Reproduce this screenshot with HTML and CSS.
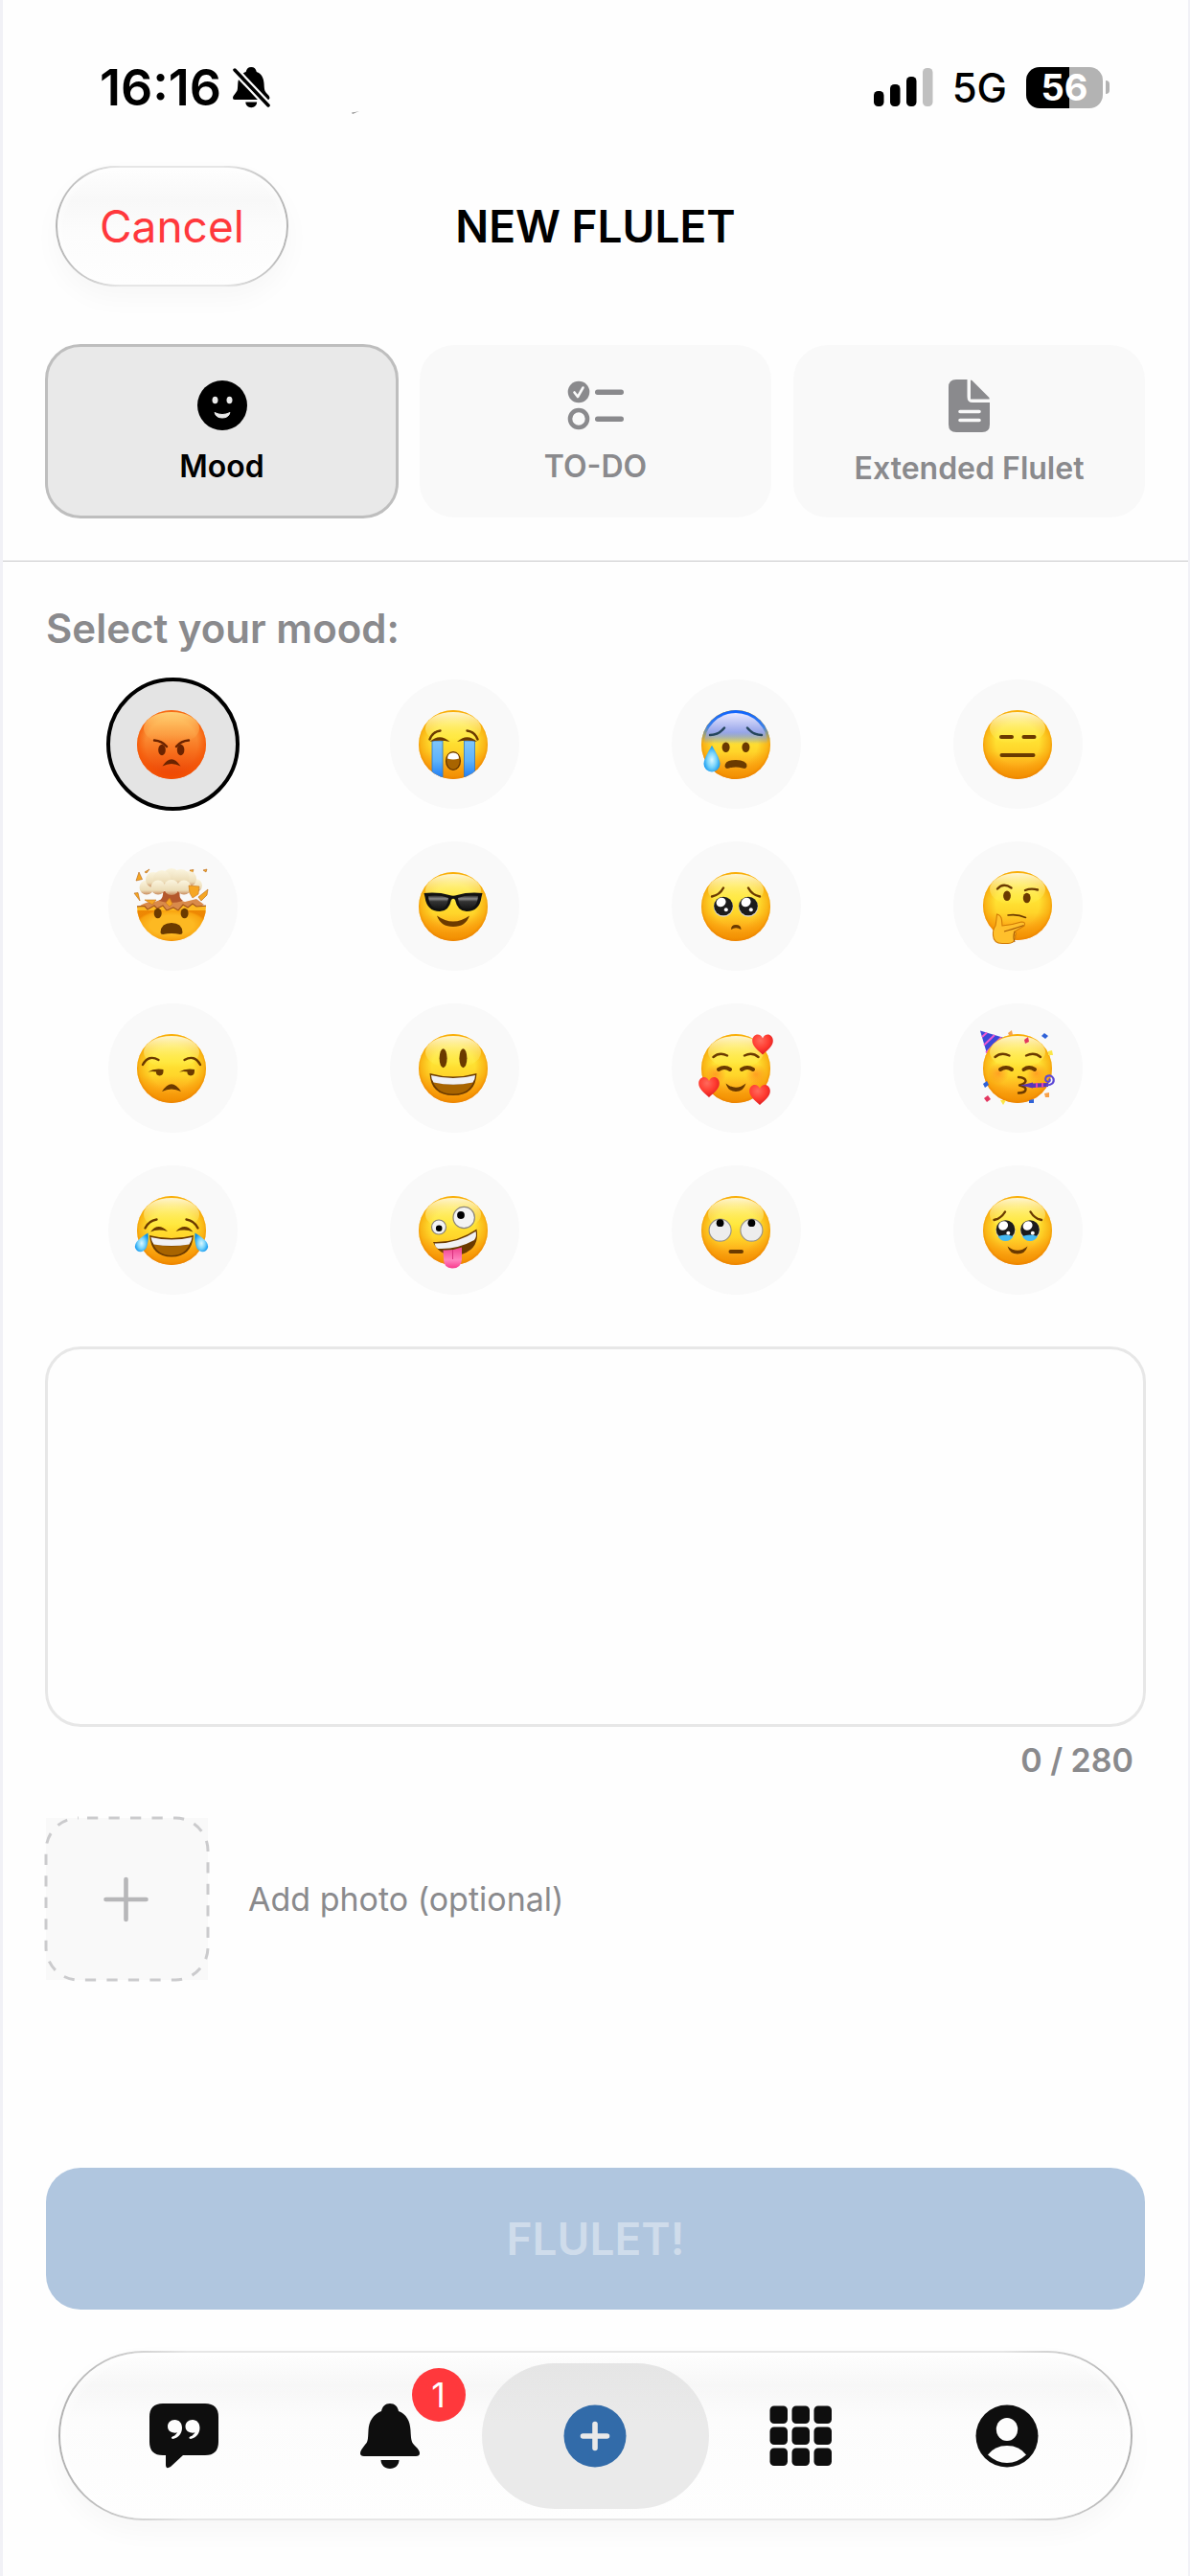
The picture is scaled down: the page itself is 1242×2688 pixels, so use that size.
FILE: index.html
```html
<!DOCTYPE html>
<html lang="en">

<head>
    <meta charset="UTF-8">
    <meta name="viewport" content="width=device-width, initial-scale=1.0">
    <title>New Flulet</title>
    <link rel="stylesheet" href="styles.css">
</head>

<body>
    <!-- Shared gradients and shapes -->
    <svg class="defs" width="0" height="0" aria-hidden="true">
        <defs>
            <linearGradient id="skin" x1="0" y1="0" x2="0" y2="1">
                <stop offset="0" stop-color="#ffce10" />
                <stop offset="0.4" stop-color="#ffe434" />
                <stop offset="0.6" stop-color="#ffd52a" />
                <stop offset="0.8" stop-color="#fdac18" />
                <stop offset="1" stop-color="#ee8a04" />
            </linearGradient>
            <radialGradient id="rim" cx="0.5" cy="0.48" r="0.52">
                <stop offset="0.6" stop-color="#f59300" stop-opacity="0" />
                <stop offset="0.9" stop-color="#f59300" stop-opacity="0.55" />
                <stop offset="1" stop-color="#ec8200" stop-opacity="0.9" />
            </radialGradient>
            <linearGradient id="shine" x1="0" y1="0" x2="0" y2="1">
                <stop offset="0" stop-color="#fffde8" stop-opacity="0.9" />
                <stop offset="1" stop-color="#ffff60" stop-opacity="0" />
            </linearGradient>
            <linearGradient id="angry" x1="0" y1="0" x2="0" y2="1">
                <stop offset="0" stop-color="#fda03c" />
                <stop offset="0.35" stop-color="#fb9238" />
                <stop offset="0.6" stop-color="#f7701d" />
                <stop offset="1" stop-color="#ea3c00" />
            </linearGradient>
            <radialGradient id="angryRim" cx="0.5" cy="0.5" r="0.5">
                <stop offset="0.75" stop-color="#f55505" stop-opacity="0" />
                <stop offset="1" stop-color="#f55505" stop-opacity="0.8" />
            </radialGradient>
            <linearGradient id="angryShine" x1="0" y1="0" x2="0" y2="1">
                <stop offset="0" stop-color="#ffdc80" stop-opacity="0.9" />
                <stop offset="1" stop-color="#ffb050" stop-opacity="0" />
            </linearGradient>
            <linearGradient id="cold" x1="0" y1="0" x2="0" y2="1">
                <stop offset="0" stop-color="#0d62ff" />
                <stop offset="0.25" stop-color="#3f83e6" />
                <stop offset="0.48" stop-color="#6a9aa0" stop-opacity="0" />
            </linearGradient>
            <linearGradient id="coldInner" x1="0" y1="0" x2="0" y2="1">
                <stop offset="0" stop-color="#e9e8ff" />
                <stop offset="0.3" stop-color="#98a6ea" />
                <stop offset="0.5" stop-color="#a3a8b8" stop-opacity="0" />
            </linearGradient>
            <linearGradient id="stream" x1="0" y1="0" x2="0" y2="1">
                <stop offset="0" stop-color="#80c6fa" />
                <stop offset="0.5" stop-color="#5cb2fb" />
                <stop offset="1" stop-color="#1572f0" />
            </linearGradient>
            <radialGradient id="drop" cx="0.5" cy="0.55" r="0.55">
                <stop offset="0" stop-color="#d9f7ff" />
                <stop offset="0.5" stop-color="#79d4fb" />
                <stop offset="1" stop-color="#0a93ee" />
            </radialGradient>
            <linearGradient id="cloud" x1="0" y1="0" x2="0" y2="1">
                <stop offset="0" stop-color="#fbf5df" />
                <stop offset="0.7" stop-color="#ecdcb7" />
                <stop offset="1" stop-color="#c98a5c" />
            </linearGradient>
            <radialGradient id="heartFill" cx="0.4" cy="0.3" r="0.8">
                <stop offset="0" stop-color="#ff6a5c" />
                <stop offset="0.5" stop-color="#ff3b30" />
                <stop offset="1" stop-color="#d4121c" />
            </radialGradient>
            <radialGradient id="blush">
                <stop offset="0" stop-color="#ff7a1a" stop-opacity="0.6" />
                <stop offset="1" stop-color="#ff7a1a" stop-opacity="0" />
            </radialGradient>
            <linearGradient id="lens" x1="0" y1="0" x2="0" y2="1">
                <stop offset="0" stop-color="#222" />
                <stop offset="0.25" stop-color="#8a8a8a" />
                <stop offset="0.45" stop-color="#333" />
                <stop offset="1" stop-color="#161616" />
            </linearGradient>
            <linearGradient id="tongue" x1="0" y1="0" x2="0" y2="1">
                <stop offset="0" stop-color="#f0418f" />
                <stop offset="0.6" stop-color="#ff84bf" />
                <stop offset="1" stop-color="#f8398c" />
            </linearGradient>
            <clipPath id="faceClip">
                <circle cx="40" cy="40" r="36" />
            </clipPath>
            <g id="face">
                <circle cx="40" cy="40" r="36" fill="url(#skin)" />
                <circle cx="40" cy="40" r="36" fill="url(#rim)" />
                <ellipse cx="40" cy="23" rx="29" ry="17" fill="url(#shine)" />
            </g>
            <g id="bigEye">
                <circle cy="1" r="10.2" fill="#d9d4cc" />
                <circle r="9.8" fill="#1c1c1c" />
                <ellipse cx="-2.4" cy="-4" rx="5.2" ry="4.6" fill="#fff" transform="rotate(-35 -2.4 -4)" />
                <circle cx="2.8" cy="3.8" r="2" fill="#fff" />
            </g>
            <path id="heart" d="M0 10.5C-6 5-10.8 1.5-10.8-4C-10.8-8-8-10.5-5.3-10.5C-3-10.5-1-9 0-6.5C1-9 3-10.5 5.3-10.5C8-10.5 10.8-8 10.8-4C10.8 1.5 6 5 0 10.5Z" fill="url(#heartFill)" />
            <path id="tear" d="M0-13.5Q8.5 0 8.5 5.5A8.5 8.5 0 0 1-8.5 5.5Q-8.5 0 0-13.5Z" fill="url(#drop)" />
            <g id="bell">
                <path d="M31 0c5 0 8 3 9 8 8 3 12 10 12.5 20 .5 10 1 12 3.5 15 4 4 6 6 6 9q0 3-4 3H4q-4 0-4-3c0-3 2-5 5-9 3-3 3-5 3.5-15C9 18 14 11 22 8c1-5 4-8 9-8z" />
                <path d="M21.5 59h19c0 5-4 9-9.5 9s-9.500-4-9.500-9z" />
            </g>
            <mask id="slashMask" maskUnits="userSpaceOnUse" x="0" y="0" width="40" height="43">
                <rect width="40" height="43" fill="#fff" />
                <path d="M2 3 37 40" stroke="#000" stroke-width="8" stroke-linecap="round" />
            </mask>
        </defs>
    </svg>

    <div class="screen">
        <div class="status-bar">
            <div class="status-left">
                <span class="clock">16:16</span>
                <svg width="40" height="43" viewBox="0 0 40 43">
                    <g mask="url(#slashMask)">
                        <use href="#bell" transform="scale(0.62)" />
                    </g>
                    <path d="M2 3 37 40" stroke="#000" stroke-width="3.5" stroke-linecap="round" />
                </svg>
                <svg class="glint" width="8" height="3" viewBox="0 0 8 3">
                    <path d="M0 1.500Q3 1 8 0Q4 1.500 1 3Z" fill="#8e8e8e" />
                </svg>
            </div>
            <div class="status-right">
                <svg width="62" height="40" viewBox="0 0 62 40">
                    <rect x="0" y="24" width="10.5" height="16" rx="4.5" />
                    <rect x="17" y="17" width="10.5" height="23" rx="4.5" />
                    <rect x="34" y="9" width="10.5" height="31" rx="4.5" />
                    <rect x="51" y="0" width="10.5" height="40" rx="4.5" fill="#c0c0c0" />
                </svg>
                <span class="network">5G</span>
                <div class="battery"><span class="battery-level">56</span></div>
            </div>
        </div>

        <header class="top-bar">
            <button type="button" class="cancel-button">Cancel</button>
            <h1 class="title">NEW FLULET</h1>
        </header>

        <div class="type-tabs">
            <button type="button" class="type-tab active">
                <svg width="52" height="52" viewBox="0 0 52 52">
                    <circle cx="26" cy="26" r="26" />
                    <ellipse cx="18.5" cy="20.5" rx="3" ry="3.8" fill="#e9e9e9" />
                    <ellipse cx="33.5" cy="20.5" rx="3" ry="3.8" fill="#e9e9e9" />
                    <path d="M18 33.5Q26 37.5 34 33.5Q32.5 39 26 39Q19.5 39 18 33.5Z" fill="#e9e9e9" stroke="#e9e9e9" stroke-linejoin="round" />
                </svg>
                <span>Mood</span>
            </button>
            <button type="button" class="type-tab">
                <svg width="60" height="52" viewBox="0 0 60 52" fill="#8a8a8d">
                    <circle cx="12" cy="12" r="11.3" />
                    <path d="M7.5 12.5 11 17 16.5 7.5" fill="none" stroke="#f9f9f9" stroke-width="2.6" stroke-linecap="round" stroke-linejoin="round" />
                    <circle cx="12" cy="40" r="9" fill="none" stroke="#8a8a8d" stroke-width="4.6" />
                    <rect x="29" y="9.5" width="30" height="5.5" rx="2.7" />
                    <rect x="29" y="37.5" width="30" height="5.5" rx="2.7" />
                </svg>
                <span>TO-DO</span>
            </button>
            <button type="button" class="type-tab">
                <svg width="44" height="55" viewBox="0 0 44 55" fill="#8a8a8d">
                    <path d="M8 0H19.5V18Q19.5 24 25 24H43V47Q43 55 35 55H8Q0 55 0 47V8Q0 0 8 0Z" />
                    <path d="M23 1Q23 0 24.5 1L42 18.5Q43.5 20.5 42 20.5H23Z" />
                    <path d="M12 33.5H32M12 42.5H32" stroke="#f9f9f9" stroke-width="3.6" stroke-linecap="round" />
                </svg>
                <span>Extended Flulet</span>
            </button>
        </div>

        <main class="content">
            <h2 class="section-label" id="moodLabel">Select your mood:</h2>

            <div class="mood-grid" role="radiogroup" aria-labelledby="moodLabel">
                <label class="mood">
                    <input type="radio" name="mood" value="angry" aria-label="Angry" checked>
                    <svg viewBox="1 0 80 80">
                        <circle cx="40" cy="40" r="36" fill="url(#angry)" />
                        <circle cx="40" cy="40" r="36" fill="url(#angryRim)" />
                        <ellipse cx="40" cy="23" rx="29" ry="17" fill="url(#angryShine)" />
                        <g fill="#6b2300">
                            <ellipse cx="30" cy="45.5" rx="3.8" ry="5.7" />
                            <ellipse cx="49.6" cy="45.5" rx="3.8" ry="5.7" />
                            <path d="M30.5 62.5Q40 48 49.5 62.5Q40 57.5 30.5 62.5Z" />
                        </g>
                        <path d="M22 35.5Q30 36 35 42M58 35.5Q50 36 45 42" class="line red" />
                    </svg>
                </label>
                <label class="mood">
                    <input type="radio" name="mood" value="crying" aria-label="Crying">
                    <svg viewBox="1 0 80 80">
                        <use href="#face" />
                        <g clip-path="url(#faceClip)" stroke="#2b79c9" stroke-width="0.8">
                            <rect x="18" y="36" width="11" height="42" fill="url(#stream)" />
                            <rect x="51.5" y="36" width="11" height="42" fill="url(#stream)" />
                        </g>
                        <path d="M15.5 34.5Q18.5 26.5 26.5 25.5M65.5 34.5Q62.5 26.5 54.5 25.5" class="line" />
                        <path d="M15.5 37Q26 27.5 36.5 37Q26 34.5 15.5 37ZM44 37Q54.5 27.5 65 37Q54.5 34.5 44 37Z" class="ink" />
                        <ellipse cx="40" cy="57" rx="7.4" ry="9.4" fill="#a86400" stroke="#6b3a00" stroke-width="1.4" />
                        <path d="M34 54.5Q34 48.5 40 48.5Q46 48.5 46 54.5Q40 56.5 34 54.5Z" fill="#fff" />
                    </svg>
                </label>
                <label class="mood">
                    <input type="radio" name="mood" value="anxious" aria-label="Anxious">
                    <svg viewBox="1 0 80 80">
                        <use href="#face" />
                        <circle cx="40" cy="40" r="36" fill="url(#cold)" />
                        <circle cx="40" cy="40" r="33" fill="url(#coldInner)" />
                        <path d="M13 30Q22 30 28 22.5M67 30Q58 30 52 22.5" class="line blue" />
                        <g class="ink">
                            <ellipse cx="29.6" cy="42.7" rx="4" ry="5.2" />
                            <ellipse cx="50.4" cy="42.7" rx="4" ry="5.2" />
                            <path d="M28.5 62.5Q28.5 56 40 56Q51.5 56 51.5 62.5Q51 66 47 64.5Q40 62.5 33 64.5Q29 66 28.5 62.5Z" />
                        </g>
                        <use href="#tear" x="15" y="54.5" />
                    </svg>
                </label>
                <label class="mood">
                    <input type="radio" name="mood" value="expressionless" aria-label="Expressionless">
                    <svg viewBox="1 0 80 80">
                        <use href="#face" />
                        <path d="M23 32H34M46.5 32H57.5M23.5 51H56.5" class="line thick" />
                    </svg>
                </label>

                <label class="mood">
                    <input type="radio" name="mood" value="mind-blown" aria-label="Mind blown">
                    <svg viewBox="1 0 80 80">
                        <g fill="#f5a623" stroke="#b5661a" stroke-width="0.6">
                            <path d="M3 13 6 4 9.5 11.5ZM12 4 17 1 14 5ZM59 2 63 1.5 61.5 5.5ZM1 26 5 25.5 7 34ZM73 2 77 1 76 4ZM68 30 78 22 77 28 71 34Z" />
                        </g>
                        <path d="M6 40Q14 34 20 36L28 33 36 35 44 32 54 35 66 32 74 38 60 44 20 44Z" fill="#d98a4a" />
                        <path d="M31 24Q32 31 27 34Q40 38 52 34Q47 31 49 24Z" fill="#b4582c" />
                        <g fill="url(#cloud)">
                            <circle cx="14" cy="20" r="7.5" />
                            <circle cx="65" cy="18" r="7" />
                            <circle cx="21" cy="12" r="8" />
                            <circle cx="58" cy="11" r="8" />
                            <circle cx="40" cy="9" r="9" />
                            <circle cx="30" cy="11" r="9" />
                            <circle cx="50" cy="9.5" r="8.5" />
                            <circle cx="26" cy="20" r="7.5" />
                            <circle cx="53" cy="20" r="7.5" />
                            <circle cx="40" cy="20" r="8" />
                        </g>
                        <g clip-path="url(#faceClip)">
                            <path d="M3 40 12 39.5 15 43 22 39 25 42 31 39 35 44 42 41 47 44 52 38 57 41 62 37 66 40 77 39V78H3Z" fill="#fdb922" stroke="#a5571c" stroke-width="1.2" />
                            <path d="M4 44H76V76H4Z" fill="url(#rim)" />
                        </g>
                        <path d="M58 18 69 19 68 27 62 31 59 26ZM12 33 24 33 20 38ZM38 31 41 37 38 40 34 36Z" fill="#f6a623" stroke="#c8741a" stroke-width="0.6" />
                        <g class="ink">
                            <ellipse cx="25.7" cy="47" rx="4" ry="5.2" />
                            <ellipse cx="53.6" cy="47" rx="4" ry="5.2" />
                            <path d="M28.5 67Q29 57 40 57Q51 57 51.5 67Q51.5 69 49 69Q40 67 31 69Q28.5 69 28.5 67Z" />
                        </g>
                    </svg>
                </label>
                <label class="mood">
                    <input type="radio" name="mood" value="cool" aria-label="Cool">
                    <svg viewBox="1 0 80 80">
                        <use href="#face" />
                        <path d="M9.5 26Q24 24.5 36 28Q40 29.5 44 28Q56 24.5 70.5 26L69.5 30Q67.5 45 54 45Q44.5 45 42 33Q40 30.5 38 33Q35.5 45 26 45Q12.5 45 10.5 30Z" fill="#111" />
                        <path d="M14 29Q25 27 35 31Q34 42.5 26 42.5Q15 42.5 14 29ZM66 29Q55 27 45 31Q46 42.5 54 42.5Q65 42.5 66 29Z" fill="url(#lens)" />
                        <path d="M23 49.5Q40 61.5 57 49.5Q53 61 40 61Q27 61 23 49.5Z" class="ink" />
                    </svg>
                </label>
                <label class="mood">
                    <input type="radio" name="mood" value="pleading" aria-label="Pleading">
                    <svg viewBox="1 0 80 80">
                        <use href="#face" />
                        <path d="M15 29.5Q23 28 27 20.5M65 29.5Q57 28 53 20.5" class="line" />
                        <use href="#bigEye" x="27" y="39.5" />
                        <use href="#bigEye" x="53" y="39.5" />
                        <path d="M35 64Q35 59 40 59Q45.5 59 45.5 64Q40 60.5 35 64Z" class="ink" />
                    </svg>
                </label>
                <label class="mood">
                    <input type="radio" name="mood" value="thinking" aria-label="Thinking">
                    <svg viewBox="1 0 80 80">
                        <use href="#face" y="-1" />
                        <path d="M19 21.5Q25 14.5 33.5 20.5M48 23Q54 20.5 61 22.5" class="line" />
                        <path d="M30 49Q40 47.5 48.5 51.5" class="line thin" />
                        <g class="ink">
                            <ellipse cx="29" cy="28.7" rx="3.9" ry="5.2" />
                            <ellipse cx="49.7" cy="31" rx="3.9" ry="5.2" />
                        </g>
                        <path d="M18.5 48Q23 49 23.5 54L24 60Q35 59 44 56Q49 56 47 60L37 66Q39.5 68 37.5 70Q38.5 72.5 37 74Q36 78.5 30 78.5H24Q15 78.5 14.5 70Q14 64 17 60Q18 54 18.5 48Z" fill="#ffc02c" stroke="#d27b06" stroke-width="1.1" />
                        <path d="M26 66Q34 64 46.5 59.5M37 66Q35 72 37 77" fill="none" stroke="#a85c08" stroke-width="1.2" />
                    </svg>
                </label>

                <label class="mood">
                    <input type="radio" name="mood" value="unamused" aria-label="Unamused">
                    <svg viewBox="1 0 80 80">
                        <use href="#face" />
                        <path d="M10 36Q16 25 26.5 31M70 36Q64 25 53.5 31" class="line" />
                        <path d="M15.5 43.5Q22 39.5 31.5 41Q32 47.5 27.5 47.5Q23.5 47 24 43.5Q20 42.5 15.5 43.5ZM48 43.5Q54.5 39.5 64 41Q64.5 47.5 60 47.5Q56 47 56.5 43.5Q52.5 42.5 48 43.5ZM30 64Q40 48.5 50 64Q40 59 30 64Z" class="ink" />
                    </svg>
                </label>
                <label class="mood">
                    <input type="radio" name="mood" value="happy" aria-label="Happy">
                    <svg viewBox="1 0 80 80">
                        <use href="#face" />
                        <g class="ink">
                            <ellipse cx="29.6" cy="29.3" rx="4" ry="10" />
                            <ellipse cx="50.4" cy="29.3" rx="4" ry="10" />
                            <path d="M15.5 45Q40 52 64.5 45Q63.5 68 40 68Q16.5 68 15.5 45Z" />
                        </g>
                        <path d="M19 54Q40 60 61 54Q56 66.5 40 66.5Q24 66.5 19 54Z" fill="#a86400" />
                        <path d="M17 47Q40 53 63 47Q63 51 60.5 54.5Q40 59 19.5 54.5Q17 51 17 47Z" fill="#f1f1f5" />
                    </svg>
                </label>
                <label class="mood">
                    <input type="radio" name="mood" value="loved" aria-label="Loved">
                    <svg viewBox="1 0 80 80">
                        <use href="#face" />
                        <circle cx="19" cy="46" r="11" fill="url(#blush)" />
                        <circle cx="61" cy="46" r="11" fill="url(#blush)" />
                        <path d="M16.5 28Q23 22.5 31 26.5M63.5 28Q57 22.5 49 26.5" class="line" />
                        <path d="M22 41Q28 37 34 41M46 41Q52 37 58 41" class="line thick" />
                        <path d="M29.5 55.5Q40 64 50.5 55.5Q48 64 40 64Q32 64 29.5 55.5Z" class="ink" />
                        <use href="#heart" x="68" y="15" />
                        <use href="#heart" x="12" y="59.5" />
                        <use href="#heart" x="65" y="67.5" />
                    </svg>
                </label>
                <label class="mood">
                    <input type="radio" name="mood" value="party" aria-label="Party">
                    <svg viewBox="1 0 80 80">
                        <path d="M1 0.5 26 8 8.5 26Z" fill="#3b49d8" />
                        <path d="M3 7 8 2.5M5 15.5 16 5M7 23.5 23 7.5" stroke="#f05ad0" stroke-width="2" />
                        <use href="#face" />
                        <circle cx="20" cy="45" r="11" fill="url(#blush)" />
                        <circle cx="60" cy="45" r="11" fill="url(#blush)" />
                        <path d="M16.5 28Q23 22.5 31.5 26.5M64 28Q57.5 22.5 49 26.5" class="line" />
                        <path d="M22 41Q28 37 34 41M46.5 41Q52 37 58 41" class="line thick" />
                        <path d="M41 49Q48 49.5 48.5 53Q48 56 42 57.5Q49 59 48.5 62Q48 65.5 41 65.5" class="line" />
                        <path d="M43 57.5 56 54.5V60.5ZM56 55.5 72 55V59L56 60Z" fill="#5a35b8" />
                        <path d="M60 55V60M66 55V59.5" stroke="#e33fb0" stroke-width="2" />
                        <path d="M70 57.5Q79 57 77.5 50.5Q75 45.5 70 48.5Q67.5 53 72 54Q75 53 73 50.5" fill="none" stroke="#5c48d6" stroke-width="2.2" />
                        <path d="M68 3 72 6 69 9 65 6Z" fill="#2f62d8" />
                        <path d="M47 10 51 7 52 12 48 14Z" fill="#e3365f" />
                        <path d="M30 3 34 0 35 5 31 5Z" fill="#f8a24a" />
                        <path d="M72 22 76 21 77 26 72 26Z" fill="#fbe748" />
                        <path d="M4 56 8 53 10 57 6 60Z" fill="#2f62d8" />
                        <path d="M5 71 9 68 12 72 8 75Z" fill="#e3365f" />
                        <path d="M22 73 28 73 25 78Z" fill="#fbe748" />
                        <path d="M52 73 57 72 57 76 52 76Z" fill="#2f62d8" />
                        <path d="M68 66 73 65 73 70 69 70Z" fill="#f8a24a" />
                    </svg>
                </label>

                <label class="mood">
                    <input type="radio" name="mood" value="joy" aria-label="Tears of joy">
                    <svg viewBox="1 0 80 80">
                        <use href="#face" />
                        <path d="M12.5 37.5Q16 30 24.5 28.5M67.5 37.5Q64 30 55.5 28.5" class="line" />
                        <path d="M18 41.5Q26 31 36 41Q26 38 18 41.5ZM44.5 41Q54 31 62.5 41.5Q54 38 44.5 41ZM17 45Q40 51 63 45Q61 67.5 40 67.5Q19 67.5 17 45Z" class="ink" />
                        <path d="M21 54Q40 59 59 54Q54 66 40 66Q26 66 21 54Z" fill="#a86400" />
                        <path d="M18.5 47Q40 52 61.5 47Q61 51 58.5 54.5Q40 57.5 21.5 54.5Q19 51 18.5 47Z" fill="#f1f1f5" />
                        <path d="M15.5 42.5Q16.5 52 13.5 58.5Q9 64.5 4 61Q0 57 3.5 52Q7 47.5 15.5 42.5Z" fill="url(#drop)" />
                        <path d="M64.5 42.5Q63.5 52 66.5 58.5Q71 64.5 76 61Q80 57 76.5 52Q73 47.5 64.5 42.5Z" fill="url(#drop)" />
                    </svg>
                </label>
                <label class="mood">
                    <input type="radio" name="mood" value="zany" aria-label="Zany">
                    <svg viewBox="1 0 80 80">
                        <use href="#face" />
                        <g fill="#f3f3f3" stroke="#8a8378" stroke-width="1.2">
                            <circle cx="25" cy="36.5" r="7.5" />
                            <circle cx="51.2" cy="26.5" r="11.2" />
                        </g>
                        <circle cx="25.2" cy="37.7" r="3.3" />
                        <circle cx="48" cy="24" r="3.9" />
                        <path d="M19 52Q44 53 64.5 38.5Q68 58 50 64.5Q27 70 19 52Z" class="ink" />
                        <path d="M20.5 53.5Q44 54 63.5 41Q65 46 62 50Q44 60 24 59Q21 57 20.5 53.5Z" fill="#f1f1f5" />
                        <path d="M29.5 60.5Q40 61 49 57.5V70Q48.5 79.5 39 79.5Q30 79 30 70Z" fill="url(#tongue)" />
                        <path d="M39.5 60V70" stroke="#d9317f" stroke-width="1" />
                    </svg>
                </label>
                <label class="mood">
                    <input type="radio" name="mood" value="eye-roll" aria-label="Eye roll">
                    <svg viewBox="1 0 80 80">
                        <use href="#face" />
                        <g fill="#ededed" stroke="#96918a" stroke-width="1.2">
                            <circle cx="23.6" cy="39.7" r="11.5" />
                            <circle cx="56.4" cy="39.7" r="11.5" />
                        </g>
                        <circle cx="23.6" cy="32.2" r="3.9" />
                        <circle cx="56.4" cy="32.2" r="3.9" />
                        <path d="M34.5 62H46" class="line thick" />
                    </svg>
                </label>
                <label class="mood">
                    <input type="radio" name="mood" value="touched" aria-label="Holding back tears">
                    <svg viewBox="1 0 80 80">
                        <use href="#face" />
                        <path d="M15.5 29Q23 27.5 27 20.5M65 29Q57.5 27.5 53.5 20.5" class="line" />
                        <use href="#bigEye" x="27.5" y="39" />
                        <use href="#bigEye" x="53" y="39" />
                        <path d="M19.5 46Q27.5 43 35.5 46Q33 51 27.5 51Q22 51 19.5 46ZM45 46Q53 43 61 46Q58.5 51 53 51Q47.5 51 45 46Z" fill="#45b9f2" />
                        <path d="M29.5 56.5Q40 65 50.5 56.5Q48 64.5 40 64.5Q32 64.5 29.5 56.5Z" class="ink" />
                    </svg>
                </label>
            </div>

            <textarea class="message" aria-label="Message" maxlength="280"></textarea>
            <p class="counter">0 / 280</p>

            <div class="photo-row">
                <button type="button" class="photo-button" id="photoButton" aria-labelledby="photoLabel">
                    <svg width="173" height="173" viewBox="-2 -2 173 173" fill="none">
                        <rect width="169" height="169" rx="34" stroke="#cbcbcd" stroke-width="3" stroke-dasharray="11.25" stroke-dashoffset="-9" />
                        <path d="M83.5 64V106M62.5 85H104.5" stroke="#b7b7b9" stroke-width="4.6" stroke-linecap="round" />
                    </svg>
                </button>
                <label class="photo-label" id="photoLabel" for="photoButton">Add photo (optional)</label>
            </div>
        </main>

        <footer class="bottom">
            <button type="submit" class="submit-button" disabled>FLULET!</button>

            <nav class="nav-bar">
                <a href="#" class="nav-item" aria-label="Feed">
                    <svg width="72" height="68" viewBox="0 0 72 68">
                        <path d="M14 0H58Q72 0 72 14V40Q72 54 58 54H35L22 66Q17 69 17 64V54H14Q0 54 0 40V14Q0 0 14 0Z" />
                        <path id="quote" fill="#fdfdfd" d="M26.5 17c4.5 0 7.5 3.5 7.5 8.5 0 6-4 10.5-9.5 11.500q-3-.5-.5-2.500 4-1.500 5-4.500-1.500 1-3.500.5c-4-.5-6.500-3-6.500-6.500 0-4 3-7 7.500-7z" />
                        <use href="#quote" x="18.5" />
                    </svg>
                </a>
                <a href="#" class="nav-item" aria-label="Notifications">
                    <svg width="62" height="68" viewBox="0 0 62 68">
                        <use href="#bell" />
                    </svg>
                    <span class="badge">1</span>
                </a>
                <a href="#" class="nav-item active" aria-label="New">
                    <svg width="66" height="66" viewBox="0 0 66 66">
                        <circle cx="33" cy="33" r="32.5" fill="#326ba9" />
                        <path d="M33 20.5V45.5M20.5 33H45.5" stroke="#e9e9e9" stroke-width="5.6" stroke-linecap="round" />
                    </svg>
                </a>
                <a href="#" class="nav-item" aria-label="Apps">
                    <svg width="66" height="64" viewBox="0 0 66 64">
                        <rect id="cell" x="0.5" y="0.5" width="18.5" height="18.5" rx="4.5" />
                        <use href="#cell" x="23" />
                        <use href="#cell" x="46" />
                        <use href="#cell" y="22" />
                        <use href="#cell" x="23" y="22" />
                        <use href="#cell" x="46" y="22" />
                        <use href="#cell" y="44" />
                        <use href="#cell" x="23" y="44" />
                        <use href="#cell" x="46" y="44" />
                    </svg>
                </a>
                <a href="#" class="nav-item" aria-label="Profile">
                    <svg width="66" height="66" viewBox="0 0 66 66">
                        <circle cx="33" cy="33" r="32.5" />
                        <ellipse cx="33" cy="26" rx="11.2" ry="12" fill="#fdfdfd" />
                        <path d="M13 52.5Q20 43 33 43Q46 43 53 52.5Q44 61 33 61Q22 61 13 52.5Z" fill="#fdfdfd" />
                    </svg>
                </a>
            </nav>
        </footer>
    </div>
</body>

</html>
```

FILE: styles.css
```css
* {
    box-sizing: border-box;
}

body {
    margin: 0;
    font-family: Inter, "Liberation Sans", sans-serif;
    background-color: #fefefe;
    color: #000;
}

button,
textarea {
    font-family: inherit;
    border: none;
    margin: 0;
    padding: 0;
}

button {
    cursor: pointer;
}

.defs {
    position: absolute;
}

.screen {
    display: flex;
    flex-direction: column;
    min-height: 100vh;
    border-left: 3px solid #f1f1f6;
    border-right: 2px solid #f1f1f6;
}

/* Status bar */
.status-bar {
    display: flex;
    justify-content: space-between;
    padding: 63px 82px 54px 101px;
}

.status-left,
.status-right {
    display: flex;
    align-items: center;
    height: 56px;
}

.status-left {
    gap: 12px;
}

.status-right {
    gap: 20px;
}

.clock {
    font-size: 52px;
    font-weight: 600;
}

.glint {
    align-self: flex-end;
    margin-left: 72px;
}

.network {
    font-size: 42px;
    font-weight: 500;
}

.battery {
    display: flex;
    align-items: center;
    gap: 3px;
}

.battery::after {
    content: "";
    width: 4px;
    height: 14px;
    border-radius: 0 4px 4px 0;
    background-color: #b3b3b3;
}

.battery-level {
    width: 80px;
    height: 43px;
    border-radius: 14px;
    background: linear-gradient(90deg, #000 56%, #b3b3b3 56%);
    color: #fff;
    font-size: 38px;
    font-weight: 700;
    line-height: 43px;
    text-align: center;
}

/* Top bar */
.top-bar {
    display: grid;
    grid-template-columns: 1fr auto 1fr;
    align-items: center;
    padding: 0 55px;
}

.cancel-button {
    justify-self: start;
    height: 126px;
    padding: 0 44px;
    border: 2px solid transparent;
    border-radius: 63px;
    background:
        linear-gradient(#fefefe, #f8f8f8 28%, #fcfcfc 55%, #fefefe) padding-box,
        linear-gradient(90deg, #b4b4b4, #e6e6e6 28%, #e6e6e6 72%, #b4b4b4) border-box;
    box-shadow: 0 12px 28px rgba(0, 0, 0, 0.03), inset 0 0 12px #fff;
    color: #ff383c;
    font-size: 46px;
}

.title {
    margin: 0;
    font-size: 46px;
    font-weight: 600;
}

/* Type tabs */
.type-tabs {
    display: grid;
    grid-template-columns: repeat(3, 1fr);
    gap: 23px;
    padding: 61px 45px 45px;
    border-bottom: 1px solid #c8c8ca;
}

.type-tab {
    display: flex;
    flex-direction: column;
    align-items: center;
    justify-content: center;
    gap: 18px;
    height: 180px;
    padding-top: 4px;
    border-radius: 36px;
    background-color: #f9f9f9;
    color: #8a8a8d;
    font-size: 32px;
    font-weight: 600;
    line-height: 40px;
}

.type-tab.active {
    background-color: #e9e9e9;
    color: #000;
    outline: 3px solid #bebebe;
    outline-offset: -2px;
}

/* Mood picker */
.content {
    padding: 45px 45px 0;
}

.section-label {
    margin: 0 0 28px;
    color: #8a8a8d;
    font-size: 42px;
    font-weight: 600;
    line-height: 50px;
}

.mood-grid {
    display: grid;
    grid-template-columns: repeat(4, 1fr);
    gap: 34px 30px;
}

.mood {
    display: grid;
    place-items: center;
    cursor: pointer;
}

.mood input {
    grid-area: 1 / 1;
    appearance: none;
    width: 135px;
    height: 135px;
    margin: 0;
    border-radius: 50%;
    background-color: #f9f9f9;
}

.mood input:checked {
    background-color: #e4e4e4;
    outline: 4px solid #000;
    outline-offset: -2px;
}

.mood svg {
    grid-area: 1 / 1;
    width: 80px;
    height: 80px;
    overflow: visible;
    pointer-events: none;
    z-index: 1;
}

.ink {
    fill: #6b3a00;
}

.line {
    fill: none;
    stroke: #6b3a00;
    stroke-width: 2.4;
    stroke-linecap: round;
    stroke-linejoin: round;
}

.line.red {
    stroke: #6b2300;
}

.line.blue {
    stroke: #24455c;
}

.line.thin {
    stroke-width: 1.6;
}

.line.thick {
    stroke-width: 4;
}

/* Message */
.message {
    display: block;
    width: 100%;
    height: 395px;
    margin-top: 55px;
    padding: 32px;
    border-radius: 36px;
    background-color: #fefefe;
    outline: 3px solid #e7e7e7;
    outline-offset: -2px;
    font-size: 42px;
    resize: none;
}

.counter {
    margin: 16px 12px 40px;
    color: #8a8a8d;
    font-size: 34px;
    font-weight: 600;
    line-height: 40px;
    text-align: right;
}

.photo-row {
    display: flex;
    align-items: center;
    gap: 42px;
}

.photo-button {
    display: flex;
    align-items: center;
    justify-content: center;
    width: 169px;
    height: 169px;
    background-color: #f9f9f9;
}

.photo-button svg {
    flex: none;
}

.photo-label {
    color: #8a8a8d;
    font-size: 34px;
}

/* Submit and navigation */
.bottom {
    margin-top: auto;
    padding: 40px 45px 58px;
}

.submit-button {
    display: block;
    width: 100%;
    height: 148px;
    border-radius: 36px;
    background-color: #b0c6df;
    color: #cfdceb;
    font-size: 46px;
    font-weight: 600;
}

.nav-bar {
    display: grid;
    grid-template-columns: repeat(5, 1fr);
    align-items: center;
    height: 177px;
    margin: 43px 13px 0;
    padding: 0 22px;
    border: 2px solid transparent;
    border-radius: 89px;
    background:
        linear-gradient(#fefefe, #f7f7f7 20%, #fcfcfc 40%, #fefefe) padding-box,
        linear-gradient(90deg, #b0b0b0, #e6e6e6 12%, #e6e6e6 88%, #b0b0b0) border-box;
    box-shadow: 0 12px 28px rgba(0, 0, 0, 0.03), inset 0 0 16px #fff;
}

.nav-item {
    position: relative;
    display: flex;
    align-items: center;
    justify-content: center;
    height: 152px;
    margin: 0 -11px;
    border-radius: 76px;
    fill: #0e0e0e;
}

.nav-item.active {
    background: linear-gradient(#e5e5e5, #eaeaea 40%);
}

.badge {
    position: absolute;
    top: 5px;
    left: 141px;
    width: 56px;
    height: 56px;
    border-radius: 50%;
    background-color: #ff383c;
    color: #fff;
    font-size: 36px;
    line-height: 56px;
    text-align: center;
}
```
